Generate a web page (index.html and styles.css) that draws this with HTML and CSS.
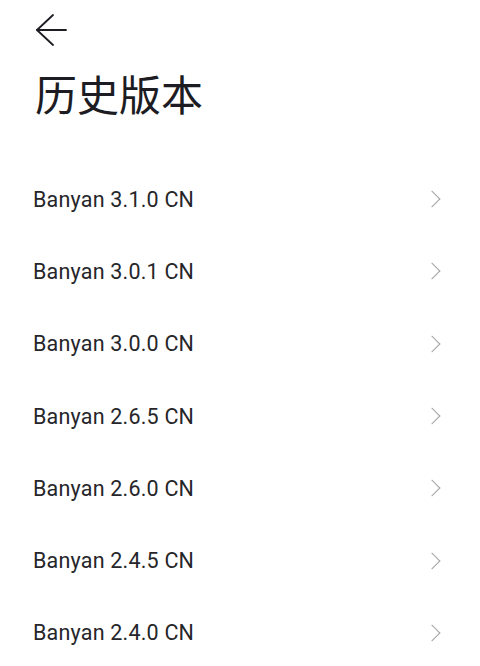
FILE: index.html
```html
<!DOCTYPE html>
<html lang="zh-CN">
<head>
    <meta charset="UTF-8">
    <meta name="viewport" content="width=device-width, initial-scale=1">
    <title>历史版本</title>
    <link rel="stylesheet" href="styles.css">
</head>
<body>
<div class="page">
    <div class="top">
        <a class="back" href="#">
            <svg width="32" height="32" viewBox="0 0 32 32" fill="none" stroke="#1c1c22" stroke-width="1.8" stroke-linecap="round" stroke-linejoin="round">
                <path d="M1 16 H30"/>
                <path d="M17 1 L1 16 L17 31"/>
            </svg>
        </a>
    </div>
    <h1 class="title">历史版本</h1>
    <div class="list">
        <a class="item" href="#"><span>Banyan 3.1.0 CN</span><i class="arrow"></i></a>
        <a class="item" href="#"><span>Banyan 3.0.1 CN</span><i class="arrow"></i></a>
        <a class="item" href="#"><span>Banyan 3.0.0 CN</span><i class="arrow"></i></a>
        <a class="item" href="#"><span>Banyan 2.6.5 CN</span><i class="arrow"></i></a>
        <a class="item" href="#"><span>Banyan 2.6.0 CN</span><i class="arrow"></i></a>
        <a class="item" href="#"><span>Banyan 2.4.5 CN</span><i class="arrow"></i></a>
        <a class="item" href="#"><span>Banyan 2.4.0 CN</span><i class="arrow"></i></a>
    </div>
</div>
</body>
</html>
```

FILE: styles.css
```css
* {
    box-sizing: border-box;
}

html, body {
    margin: 0;
    padding: 0;
    background: #fff;
    font-family: Roboto, "Noto Sans CJK SC", sans-serif;
    color: #1c1c22;
}

.page {
    overflow: hidden;
    height: 666px;
}

.top {
    height: 60px;
    padding: 14px 0 0 36px;
}

.back {
    display: block;
    width: 32px;
    height: 32px;
}

.back svg {
    display: block;
}

.title {
    margin: 5px 0 0 0;
    padding-left: 35px;
    font-family: "Noto Sans CJK SC", sans-serif;
    font-size: 42px;
    font-weight: 400;
    line-height: 56px;
    letter-spacing: 0;
}

.list {
    margin-top: 42px;
    display: flex;
    flex-flow: column nowrap;
}

.item {
    height: 72.3px;
    flex-shrink: 0;
    display: flex;
    justify-content: space-between;
    align-items: center;
    padding: 0 42px 0 33px;
    color: #26262a;
    text-decoration: none;
    font-size: 21.5px;
    letter-spacing: 0.2px;
}

.arrow {
    width: 12px;
    height: 12px;
    border-top: 1.5px solid #a3a3a3;
    border-right: 1.5px solid #a3a3a3;
    transform: rotate(45deg);
}
```
